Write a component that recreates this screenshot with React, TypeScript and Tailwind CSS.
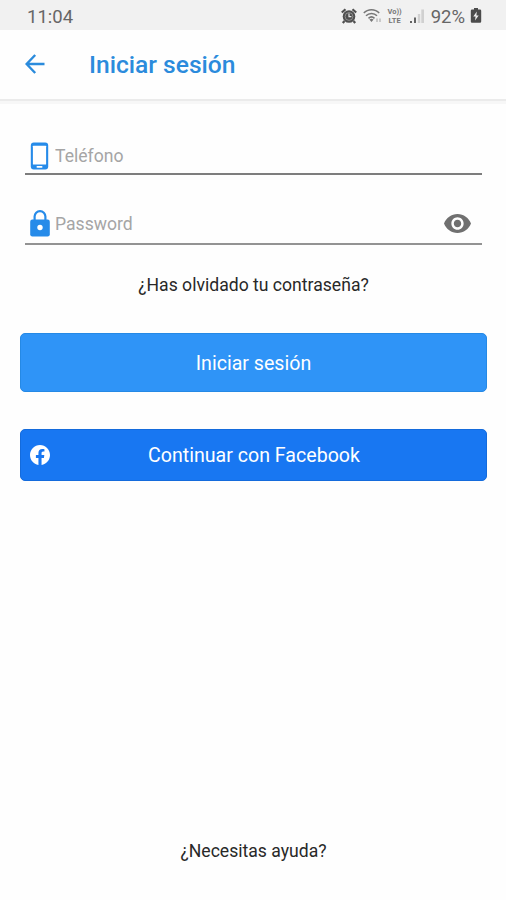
import React from "react";

interface IconProps {
  className?: string;
}

const AlarmIcon: React.FC<IconProps> = ({ className }) => (
  <svg viewBox="0 0 16 16" className={className} fill="none">
    <circle cx="8" cy="8.5" r="6.3" fill="#505050" />
    <path d="M.8 4.5 4.5 1.2M15.2 4.5 11.5 1.2M3.5 13 1.8 15M12.5 13l1.7 2" stroke="#505050" strokeWidth="2.2" />
    <circle cx="8" cy="8.5" r="3.9" stroke="#a8a8a8" strokeWidth="0.7" />
    <path d="M8 5.5v3.2h2.4" stroke="#e6e6e6" strokeWidth="1.2" />
  </svg>
);

const WifiIcon: React.FC<IconProps> = ({ className }) => (
  <svg viewBox="0 0 20 16" className={className} fill="none">
    <path d="M.8 5C4.8.6 12.2.6 16.2 5M3 7.800c3-3.200 8-3.200 11 0M5.500 10.400c1.800-1.800 4.200-1.800 6 0" stroke="#777" strokeWidth="1.5" />
    <path d="m6.400 11.500 2.100 2.500 2.100-2.500c-1.300-1-2.900-1-4.200 0z" fill="#777" />
    <path d="M14 10.500V14M17 10.500V14" stroke="#bdbdbd" strokeWidth="1.5" />
  </svg>
);

const SignalIcon: React.FC<IconProps> = ({ className }) => (
  <svg viewBox="0 0 16 16" className={className}>
    <path d="M1 13h2v2H1zM5 9.500h2V15H5z" fill="#626262" />
    <path d="M8.800 6h2.400v9H8.800zM12.300 1.500h2.700V15h-2.700z" fill="#d0d0d0" />
  </svg>
);

const BatteryIcon: React.FC<IconProps> = ({ className }) => (
  <svg viewBox="0 0 12 15" className={className}>
    <path d="M4 0h4v1.500h2A1.200 1.200 0 0 1 11.200 2.700V13.500A1.200 1.200 0 0 1 10 14.700H2A1.200 1.200 0 0 1 .8 13.500V2.700A1.200 1.200 0 0 1 2 1.500h2z" fill="#4b4b4b" />
    <path d="M6.800 3.500 3.300 8.600h2.300L5 12.500l3.700-5H6.400z" fill="#eee" />
  </svg>
);

const BackIcon: React.FC<IconProps> = ({ className }) => (
  <svg viewBox="0 0 20 20" className={className} fill="none" stroke="#2b8bdc" strokeWidth="2.4">
    <path d="M10.200 1 1.600 10l8.600 9M1.800 10H19.500" />
  </svg>
);

const PhoneIcon: React.FC<IconProps> = ({ className }) => (
  <svg viewBox="0 0 18 28" className={className}>
    <rect x="0.3" y="0.5" width="17.4" height="27" rx="3" fill="#268be9" />
    <rect x="2.4" y="3.7" width="13.2" height="18.8" rx="0.5" fill="#fff" />
    <rect x="6" y="24.1" width="6" height="1.6" rx="0.8" fill="#fff" />
  </svg>
);

const LockIcon: React.FC<IconProps> = ({ className }) => (
  <svg viewBox="0 0 20 27" className={className}>
    <path d="M4.600 11V6.500a5.400 5.400 0 0 1 10.800 0V11" fill="none" stroke="#268be9" strokeWidth="2.2" />
    <rect x="0.2" y="9.5" width="19.6" height="17" rx="2.2" fill="#268be9" />
    <circle cx="10" cy="17.5" r="2.7" fill="#fff" />
  </svg>
);

const EyeIcon: React.FC<IconProps> = ({ className }) => (
  <svg viewBox="1 4.5 22 15" preserveAspectRatio="none" className={className} fill="#707070">
    <path d="M12 4.500C7 4.500 2.730 7.610 1 12c1.730 4.390 6 7.500 11 7.500s9.270-3.110 11-7.500c-1.730-4.390-6-7.500-11-7.500zM12 17c-2.760 0-5-2.240-5-5s2.240-5 5-5 5 2.240 5 5-2.240 5-5 5zm0-8c-1.660 0-3 1.340-3 3s1.340 3 3 3 3-1.340 3-3-1.340-3-3-3z" />
  </svg>
);

const FacebookIcon: React.FC<IconProps> = ({ className }) => (
  <svg viewBox="0 0 24 24" className={className} fill="#fff">
    <path d="M24 12.070C24 5.410 18.630 0 12 0S0 5.410 0 12.070C0 18.100 4.390 23.090 10.130 24v-8.440H7.080v-3.490h3.050V9.410c0-3.020 1.790-4.690 4.530-4.690 1.310 0 2.680.24 2.680.24v2.970h-1.510c-1.490 0-1.960.93-1.960 1.890v2.250h3.330l-.53 3.490h-2.800V24C19.610 23.090 24 18.100 24 12.070z" />
  </svg>
);

const StatusBar: React.FC = () => (
  <div className="flex h-[30px] items-center bg-[#f1f1f1] pl-[27px] pr-6 pt-px text-[18.5px] leading-[22px] text-[#666]">
    <span className="pt-[3px]">11:04</span>
    <div className="ml-auto flex items-center">
      <AlarmIcon className="mr-[6px] h-4 w-4" />
      <WifiIcon className="mr-[4px] h-4 w-5" />
      <div className="mr-[6px] flex w-4 flex-col items-center text-[7.5px] font-bold leading-[9px] text-[#777]">
        <span>Vo))</span>
        <span>LTE</span>
      </div>
      <SignalIcon className="mr-[6px] h-4 w-4" />
      <span className="mr-[5px] pt-[3px]">92%</span>
      <BatteryIcon className="h-[15px] w-3" />
    </div>
  </div>
);

const App: React.FC = () => {
  return (
    <div className="flex h-[900px] w-[506px] flex-col bg-[#fefefe] font-['Roboto','Liberation_Sans',sans-serif]">
      <StatusBar />

      <header className="flex h-[71px] items-center border-b-2 border-[#ebebeb] pl-[25px]">
        <button type="button" aria-label="Volver" className="pb-px">
          <BackIcon className="h-5 w-5" />
        </button>
        <h1 className="ml-11 pt-[2px] text-[24.6px] font-medium text-[#2b8bdc]">
          Iniciar sesión
        </h1>
      </header>
      <div className="h-[3px] bg-[#f7f7f7]" />

      <main className="flex flex-1 flex-col px-5">
        <div className="ml-[5px] mr-1 mt-[34px] flex h-[37px] items-center border-b-2 border-[#7d7d7d] pl-[5px]">
          <PhoneIcon className="h-7 w-[19px]" />
          <input
            type="tel"
            placeholder="Teléfono"
            className="ml-[6px] flex-1 pt-px text-[17.6px] outline-none placeholder:text-[#a5a5a5]"
          />
        </div>

        <div className="ml-[5px] mr-1 mt-8 flex h-[38px] items-center border-b-2 border-[#939393] pb-[3px] pl-[5px] pr-[11px]">
          <LockIcon className="h-[27px] w-5" />
          <input
            type="password"
            placeholder="Password"
            className="ml-[5px] flex-1 pt-[2px] text-[17.6px] outline-none placeholder:text-[#a5a5a5]"
          />
          <EyeIcon className="h-[19px] w-[27px]" />
        </div>

        <a className="mt-[26px] pl-px text-center text-[17.6px] leading-7 text-[#282828]">
          ¿Has olvidado tu contraseña?
        </a>

        <button
          type="button"
          className="mr-[-1px] mt-[34px] h-[59px] rounded-[5px] border border-[#2589e5] bg-[#2f94f7] pt-[2px] text-[19.6px] text-white"
        >
          Iniciar sesión
        </button>

        <button
          type="button"
          className="mr-[-1px] mt-[37px] flex h-[52px] items-center rounded-[5px] border border-[#146bdc] bg-[#1877f2] pl-[9px] pr-[28px] text-[19.6px] text-white"
        >
          <FacebookIcon className="h-5 w-5" />
          <span className="flex-1 pt-[2px]">Continuar con Facebook</span>
        </button>

        <a className="mb-[35px] mt-auto pl-px text-center text-[17.6px] leading-7 text-[#282828]">
          ¿Necesitas ayuda?
        </a>
      </main>
    </div>
  );
};

export default App;
